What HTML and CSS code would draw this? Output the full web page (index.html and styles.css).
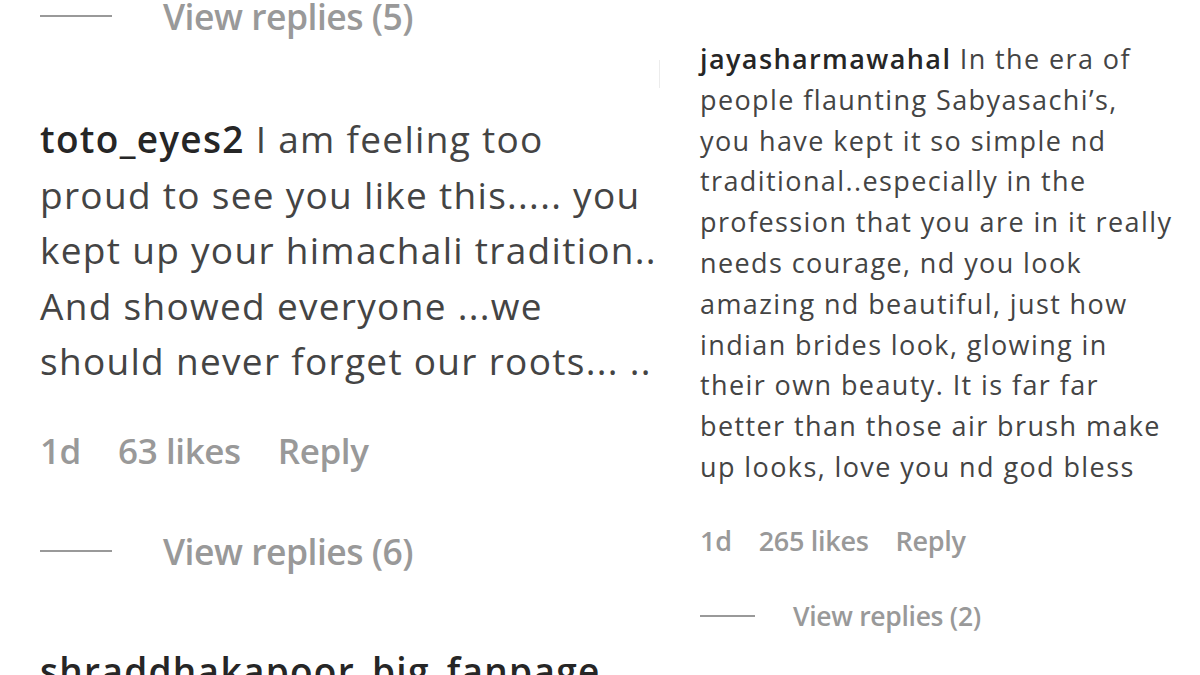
FILE: index.html
```html
<!DOCTYPE html>
<html lang="en">
<head>
    <meta charset="UTF-8">
    <meta name="viewport" content="width=device-width, initial-scale=1.0">
    <title>Comments</title>
    <link rel="stylesheet" href="styles.css">
</head>
<body>
    <div class="page">
        <section class="panel panel-left">
            <div class="view-replies view-top">
                <span class="dash"></span>
                <span>View replies (5)</span>
            </div>

            <article class="comment">
                <p class="comment-text"><span class="user">toto_eyes2</span> I am feeling too<br>proud to see you like this..... you<br>kept up your himachali tradition..<br>And showed everyone ...we<br>should never forget our roots... ..</p>
                <div class="meta">
                    <span>1d</span>
                    <span>63 likes</span>
                    <span>Reply</span>
                </div>
                <div class="view-replies">
                    <span class="dash"></span>
                    <span>View replies (6)</span>
                </div>
            </article>

            <article class="comment comment-next">
                <p class="comment-text"><span class="user">shraddhakapoor_big_fanpage</span></p>
            </article>
        </section>

        <div class="seam"></div>

        <section class="panel panel-right">
            <article class="comment">
                <p class="comment-text"><span class="user">jayasharmawahal</span> In the era of<br>people flaunting Sabyasachi’s,<br>you have kept it so simple nd<br>traditional..especially in the<br>profession that you are in it really<br>needs courage, nd you look<br>amazing nd beautiful, just how<br>indian brides look, glowing in<br>their own beauty. It is far far<br>better than those air brush make<br>up looks, love you nd god bless</p>
                <div class="meta">
                    <span>1d</span>
                    <span>265 likes</span>
                    <span>Reply</span>
                </div>
                <div class="view-replies">
                    <span class="dash"></span>
                    <span>View replies (2)</span>
                </div>
            </article>
        </section>
    </div>
</body>
</html>
```

FILE: styles.css
```css
:root {
    --user-color: #262626;
    --text-color: #444444;
    --muted-color: #999999;
}
body {
    margin: 0;
    padding: 0;
    background-color: #ffffff;
    font-family: 'Open Sans', 'Noto Sans', Arial, sans-serif;
    color: var(--text-color);
    overflow: hidden;
}
.page {
    display: flex;
    width: 1200px;
    height: 675px;
    overflow: hidden;
}
.panel {
    display: flex;
    flex-direction: column;
}
.panel-left {
    width: 619px;
    padding-left: 40px;
    margin-top: -8px;
}
.panel-right {
    flex: 1;
    padding-left: 40px;
    padding-top: 39px;
}
.seam {
    width: 1px;
    height: 28px;
    margin-top: 60px;
    background-color: #ececec;
}
.comment-text {
    margin: 0;
    white-space: nowrap;
}
.user {
    font-weight: 600;
    color: var(--user-color);
}
.meta {
    display: flex;
    color: var(--muted-color);
    font-weight: 600;
}
.view-replies {
    display: flex;
    align-items: center;
    color: var(--muted-color);
    font-weight: 600;
}
.dash {
    display: block;
    height: 2px;
    background-color: var(--muted-color);
}

/* left, big screenshot */
.panel-left .view-top {
    margin-bottom: 71px;
}
.panel-left .view-replies {
    font-size: 35.5px;
    line-height: 48px;
    letter-spacing: -0.5px;
}
.panel-left .dash {
    width: 72px;
    margin-right: 51px;
}
.panel-left .comment-text {
    font-size: 37px;
    line-height: 55.5px;
    letter-spacing: 1.3px;
}
.panel-left .meta {
    font-size: 35px;
    line-height: 48px;
    gap: 37px;
    margin-top: 38px;
    letter-spacing: -0.4px;
}
.panel-left .comment .view-replies {
    margin-top: 52px;
}
.comment-next {
    margin-top: 68px;
}

/* right, small screenshot */
.panel-right .comment-text {
    font-size: 27px;
    line-height: 40.8px;
    letter-spacing: 1.4px;
}
.panel-right .meta {
    font-size: 27px;
    line-height: 36px;
    gap: 27px;
    margin-top: 35px;
    letter-spacing: -0.3px;
}
.panel-right .view-replies {
    font-size: 26.5px;
    line-height: 36px;
    margin-top: 39px;
    letter-spacing: -0.3px;
}
.panel-right .dash {
    width: 55px;
    height: 1.5px;
    margin-right: 38px;
}
```
